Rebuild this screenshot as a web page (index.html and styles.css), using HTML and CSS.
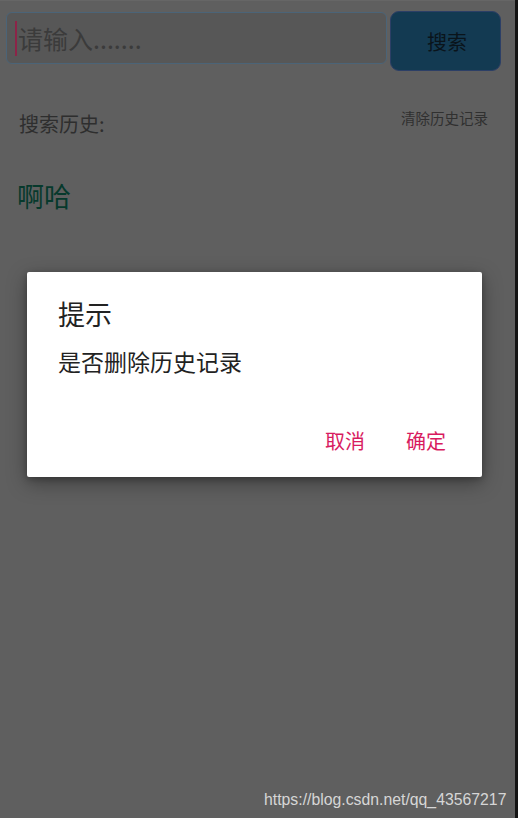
FILE: index.html
```html
<!DOCTYPE html>
<html lang="zh">
<head>
<meta charset="utf-8">
<title>搜索</title>
<link rel="stylesheet" href="styles.css">
</head>
<body>
<div class="screen">
  <div class="page">
    <div class="search-row">
      <div class="search-input">
        <span class="caret"></span>
        <span class="placeholder">请输入.......</span>
      </div>
      <div class="search-btn">搜索</div>
    </div>
    <div class="history-head">
      <span class="history-title">搜索历史:</span>
      <span class="history-clear">清除历史记录</span>
    </div>
    <div class="history-item">啊哈</div>

    <div class="dialog">
      <div class="dialog-title">提示</div>
      <div class="dialog-msg">是否删除历史记录</div>
      <div class="dialog-actions">
        <span class="dialog-btn">取消</span>
        <span class="dialog-btn">确定</span>
      </div>
    </div>

    <div class="watermark">https://blog.csdn.net/qq_43567217</div>
  </div>
  <div class="edge"></div>
</div>
</body>
</html>
```

FILE: styles.css
```css
html, body {
  margin: 0;
  padding: 0;
  background: #5f5f5f;
}

.screen {
  display: flex;
  width: 518px;
  height: 818px;
  overflow: hidden;
  font-family: "Noto Sans CJK SC", "Noto Sans", sans-serif;
}

.page {
  position: relative;
  flex: 1;
  height: 818px;
  background: #5f5f5f;
  border-top: 1px solid #666;
  box-sizing: border-box;
}

.edge {
  width: 3px;
  background: #141414;
}

.search-row {
  display: flex;
  align-items: flex-start;
  gap: 3px;
  padding: 10px 0 0 6px;
}

.search-input {
  width: 381px;
  height: 52px;
  margin-top: 1px;
  box-sizing: border-box;
  border: 1px solid #4b6478;
  border-radius: 6px;
  background: #575757;
  display: flex;
  align-items: center;
  padding-left: 8px;
}

.caret {
  width: 2px;
  height: 35px;
  background: #8c2448;
}

.placeholder {
  font-size: 25px;
  line-height: 1;
  color: #3b3b3b;
  margin-left: 1px;
}

.search-btn {
  width: 111px;
  height: 60px;
  box-sizing: border-box;
  border: 1px solid #2c3f66;
  border-radius: 9px;
  background: #133a52;
  color: #0a141b;
  font-size: 20px;
  display: flex;
  align-items: center;
  justify-content: center;
  padding-left: 3px;
}

.history-head {
  display: flex;
  justify-content: space-between;
  align-items: flex-start;
  padding: 40px 27px 0 19px;
}

.history-title {
  font-size: 20px;
  line-height: 1;
  margin-top: 3px;
  color: #2e2e2e;
}

.history-clear {
  font-size: 14.5px;
  line-height: 1;
  color: #303030;
}

.history-item {
  font-size: 27px;
  line-height: 1;
  color: #06392c;
  padding: 48px 0 0 17px;
}

.dialog {
  position: absolute;
  left: 27px;
  top: 271px;
  width: 455px;
  height: 205px;
  box-sizing: border-box;
  background: #fff;
  border-radius: 2px;
  box-shadow: 0 6px 20px rgba(0, 0, 0, 0.35), 0 2px 6px rgba(0, 0, 0, 0.25);
  padding: 28px 36px 0 31px;
}

.dialog-title {
  font-size: 27px;
  line-height: 1;
  color: #222;
}

.dialog-msg {
  font-size: 23px;
  line-height: 1;
  color: #222;
  margin-top: 23px;
}

.dialog-actions {
  display: flex;
  justify-content: flex-end;
  gap: 41px;
  margin-top: 58px;
}

.dialog-btn {
  font-size: 20px;
  line-height: 1;
  color: #d81b60;
}

.watermark {
  position: absolute;
  left: 264px;
  top: 789px;
  font-family: "Liberation Sans", Arial, sans-serif;
  font-size: 15.8px;
  line-height: 20px;
  color: #d6d6d6;
}
```
